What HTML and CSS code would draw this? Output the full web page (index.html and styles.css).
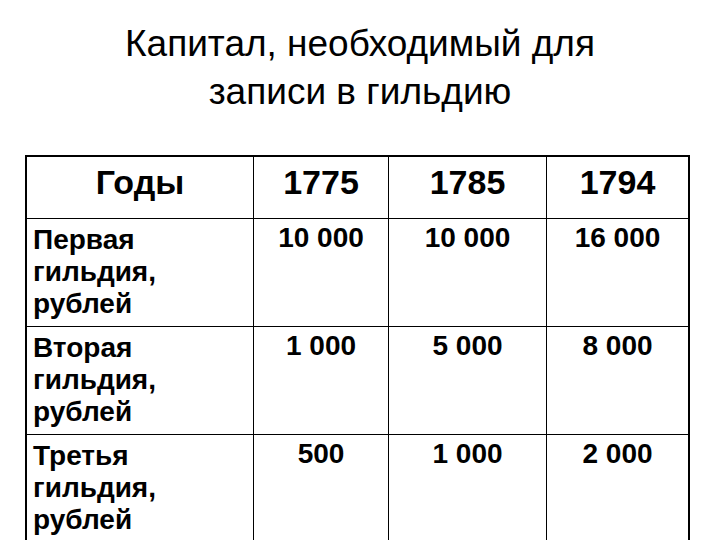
FILE: index.html
```
<!DOCTYPE html>
<html lang="ru">
<head>
<meta charset="utf-8">
<link rel="stylesheet" href="styles.css">
</head>
<body>
<h1 class="title">Капитал, необходимый для<br>записи в гильдию</h1>
<div class="table">
  <div class="cell head">Годы</div>
  <div class="cell head">1775</div>
  <div class="cell head">1785</div>
  <div class="cell head last">1794</div>

  <div class="cell label">Первая гильдия, рублей</div>
  <div class="cell num">10 000</div>
  <div class="cell num">10 000</div>
  <div class="cell num last">16 000</div>

  <div class="cell label">Вторая гильдия, рублей</div>
  <div class="cell num">1 000</div>
  <div class="cell num">5 000</div>
  <div class="cell num last">8 000</div>

  <div class="cell label">Третья гильдия, рублей</div>
  <div class="cell num">500</div>
  <div class="cell num">1 000</div>
  <div class="cell num last">2 000</div>
</div>
</body>
</html>
```
FILE: styles.css
```
html, body {
  margin: 0;
  padding: 0;
  background: #fff;
  color: #000;
  font-family: "Liberation Sans", Arial, sans-serif;
}
body {
  width: 720px;
  height: 540px;
  overflow: hidden;
}
.title {
  margin: 20px 0 0 0;
  font-size: 37px;
  font-weight: normal;
  line-height: 48px;
  text-align: center;
}
.table {
  margin: 39px 0 0 25px;
  width: 665px;
  box-sizing: border-box;
  border: 2px solid #000;
  display: grid;
  grid-template-columns: 227px 135px 158px 141px;
  grid-template-rows: 62px 108px 108px 108px;
}
.cell {
  box-sizing: border-box;
  border-right: 1px solid #000;
  border-bottom: 1px solid #000;
  font-weight: bold;
}
.cell.last {
  border-right: none;
}
.head {
  font-size: 34px;
  text-align: center;
  padding-top: 6px;
}
.label {
  font-size: 28px;
  padding: 5px 4px 0 6px;
}
.num {
  font-size: 28px;
  text-align: center;
  padding-top: 3px;
}
```
